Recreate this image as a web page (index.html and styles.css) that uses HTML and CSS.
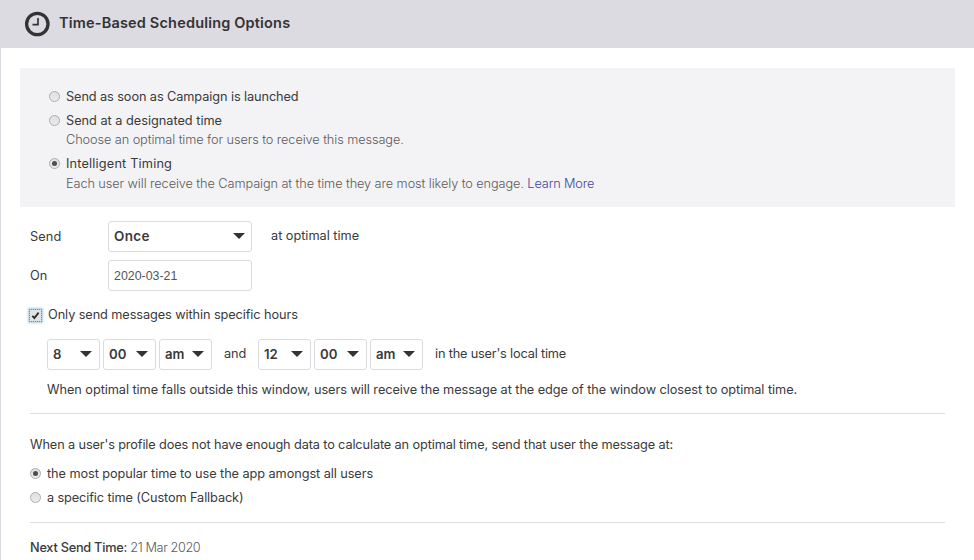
FILE: index.html
```html
<!DOCTYPE html>
<html lang="en">
<head>
<meta charset="utf-8">
<title>Time-Based Scheduling Options</title>
<link rel="stylesheet" href="styles.css">
</head>
<body>
<header class="header">
  <svg class="clock" viewBox="0 0 26 26" width="26" height="26"><circle cx="13.3" cy="13" r="10.7" fill="none" stroke="#333335" stroke-width="3.3"/><path d="M14 7V13.6H8.5" fill="none" stroke="#333335" stroke-width="1.7"/></svg>
  <h1>Time-Based Scheduling Options</h1>
</header>
<main class="content">
  <section class="panel">
    <label class="choice"><span class="radio"></span><span>Send as soon as Campaign is launched</span></label>
    <label class="choice"><span class="radio"></span><span class="designated">Send at a designated time</span></label>
    <p class="hint">Choose an optimal time for users to receive this message.</p>
    <label class="choice timing"><span class="radio on"></span><span class="intelligent">Intelligent Timing</span></label>
    <p class="hint">Each user will receive the Campaign at the time they are most likely to engage. <a class="link">Learn More</a></p>
  </section>
  <section class="form">
    <div class="row"><span class="label">Send</span><div class="box wide">Once<i class="arrow"></i></div><span class="after">at optimal time</span></div>
    <div class="row second"><span class="label">On</span><div class="box wide date">2020-03-21</div></div>
    <label class="hours-label"><span class="check"><svg viewBox="0 0 11 11" width="11" height="11"><path d="M2.3 5.8 4.4 8 8.6 2.6" fill="none" stroke="#2f2f31" stroke-width="1.9"/></svg></span><span>Only send messages within specific hours</span></label>
    <div class="hours">
      <div class="box">8<i class="arrow"></i></div><div class="box">00<i class="arrow"></i></div><div class="box">am<i class="arrow"></i></div>
      <span class="and">and</span>
      <div class="box">12<i class="arrow"></i></div><div class="box">00<i class="arrow"></i></div><div class="box">am<i class="arrow"></i></div>
      <span class="local">in the user's local time</span>
    </div>
    <p class="note">When optimal time falls outside this window, users will receive the message at the edge of the window closest to optimal time.</p>
    <hr>
    <p class="question">When a user's profile does not have enough data to calculate an optimal time, send that user the message at:</p>
    <label class="choice"><span class="radio on"></span><span class="popular">the most popular time to use the app amongst all users</span></label>
    <label class="choice"><span class="radio"></span><span class="custom">a specific time (Custom Fallback)</span></label>
    <hr class="last">
    <p class="next"><b>Next Send Time:</b> <span>21 Mar 2020</span></p>
  </section>
</main>
</body>
</html>
```
FILE: styles.css
```css
* { box-sizing: border-box; }
body {
  margin: 0;
  height: 560px;
  overflow: hidden;
  background: #fff;
  color: #3a3a3c;
  font: 400 12.75px/20px Inter, "Liberation Sans", sans-serif;
  letter-spacing: -0.1px;
  white-space: nowrap;
}
p, h1 { margin: 0; }
.header {
  height: 48px;
  background: #dcdbe1;
  display: flex;
  align-items: center;
  padding: 0 0 1px 24px;
}
.clock { margin-right: 9px; }
h1 { font-size: 14.5px; font-weight: 600; letter-spacing: 0.18px; color: #333335; margin-top: -2px; }
.content { border-left: 1px solid #dcdbe1; height: 512px; padding: 20px 19px 0 19px; }
.panel { height: 139px; background: #f3f3f5; padding: 17px 0 0 29px; }
.choice { display: flex; align-items: center; height: 24px; }
.radio {
  width: 11px;
  height: 11px;
  border: 1px solid #acacae;
  border-radius: 50%;
  background: linear-gradient(#e0e0e0, #ebebeb);
  margin: -2px 6px 0 0;
  display: flex;
  align-items: center;
  justify-content: center;
}
.radio.on::after { content: ""; width: 5px; height: 5px; border-radius: 50%; background: #4c4c4e; }
.hint { font-weight: 300; color: #5a5a5d; margin: -1px 0 0 17px; line-height: 16px; letter-spacing: -0.09px; }
.timing { margin-top: 4px; }
.timing + .hint { margin-top: 0; }
.link { color: #3c46a0; letter-spacing: -0.14px; }
.designated { letter-spacing: -0.02px; }
.intelligent { letter-spacing: 0.16px; }
.form { padding: 14px 10px 0 10px; }
.row { display: flex; align-items: center; height: 31px; }
.second { margin-top: 8px; }
.label { width: 78px; letter-spacing: 0.12px; }
.box {
  width: 53px;
  height: 31px;
  border: 1px solid #dcdce0;
  border-radius: 3px;
  padding: 0 7px 1px 5px;
  display: flex;
  align-items: center;
  justify-content: space-between;
  font-size: 13.2px;
  font-weight: 600;
  letter-spacing: -0.05px;
}
.wide { width: 144px; padding-right: 6px; font-size: 13.5px; letter-spacing: 0.35px; }
.date { font: 400 12.4px/20px "Liberation Sans", Arial, sans-serif; letter-spacing: 0; color: #555558; padding: 1px 0 0 5px; }
.arrow { width: 12px; height: 6px; background: #333335; clip-path: polygon(0 0, 100% 0, 50% 100%); }
.after { margin: -1px 0 0 19px; letter-spacing: -0.03px; }
.hours-label { display: flex; align-items: center; height: 48px; }
.check {
  width: 11px;
  height: 11px;
  margin: 0 7px 0 0;
  background: #e3e3e3;
  outline: 1px dotted #88888a;
  box-shadow: 0 0 2px 2px #a9cfe4;
  display: block;
}
.check svg { display: block; }
.hours { display: flex; align-items: center; gap: 3px; margin-left: 17px; }
.and { width: 40px; padding-left: 9px; margin-top: -1px; letter-spacing: -0.15px; }
.local { margin: -1px 0 0 9px; letter-spacing: -0.18px; }
.note { margin: 10px 0 0 17px; letter-spacing: -0.067px; }
hr { border: 0; border-top: 1px solid #dededf; margin: 13px 0 0; }
.question { margin: 21px 0 7px; letter-spacing: -0.133px; }
.popular { letter-spacing: -0.083px; }
.custom { letter-spacing: -0.12px; }
hr.last { margin-top: 12px; }
.next { margin-top: 15px; font-weight: 300; color: #5a5a5d; letter-spacing: -0.4px; }
.next b { font-weight: 500; color: #3a3a3c; letter-spacing: -0.25px; }
```
